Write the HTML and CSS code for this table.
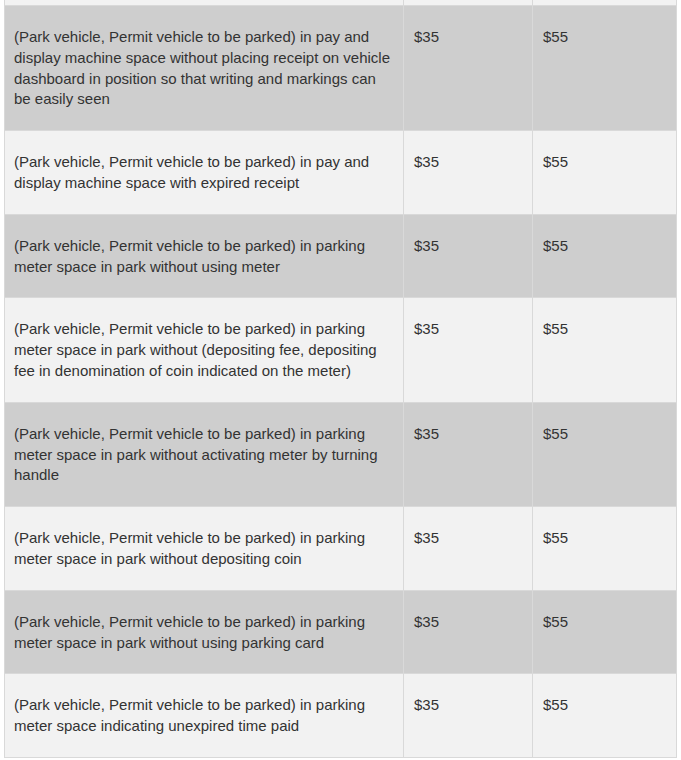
FILE: index.html
```html
<!DOCTYPE html>
<html>
<head>
<meta charset="utf-8">
<link rel="stylesheet" href="styles.css">
</head>
<body>
<div class="wrap">
<table class="fines">
<colgroup><col class="c1"><col class="c2"><col class="c3"></colgroup>
<tbody>
<tr class="prev"><td></td><td></td><td></td></tr>
<tr class="dark"><td>(Park vehicle, Permit vehicle to be parked) in pay and display machine space without placing receipt on vehicle dashboard in position so that writing and markings can be easily seen</td><td>$35</td><td>$55</td></tr>
<tr class="light"><td>(Park vehicle, Permit vehicle to be parked) in pay and display machine space with expired receipt</td><td>$35</td><td>$55</td></tr>
<tr class="dark"><td>(Park vehicle, Permit vehicle to be parked) in parking meter space in park without using meter</td><td>$35</td><td>$55</td></tr>
<tr class="light"><td>(Park vehicle, Permit vehicle to be parked) in parking meter space in park without (depositing fee, depositing fee in denomination of coin indicated on the meter)</td><td>$35</td><td>$55</td></tr>
<tr class="dark"><td>(Park vehicle, Permit vehicle to be parked) in parking meter space in park without activating meter by turning handle</td><td>$35</td><td>$55</td></tr>
<tr class="light"><td>(Park vehicle, Permit vehicle to be parked) in parking meter space in park without depositing coin</td><td>$35</td><td>$55</td></tr>
<tr class="dark"><td>(Park vehicle, Permit vehicle to be parked) in parking meter space in park without using parking card</td><td>$35</td><td>$55</td></tr>
<tr class="light"><td>(Park vehicle, Permit vehicle to be parked) in parking meter space indicating unexpired time paid</td><td>$35</td><td>$55</td></tr>
</tbody>
</table>
</div>
</body>
</html>
```
FILE: styles.css
```css
html, body {
  margin: 0;
  padding: 0;
  background: #ffffff;
}
.wrap {
  padding: 0 5px 0 4px;
}
.fines {
  width: 672px;
  border-collapse: collapse;
  table-layout: fixed;
  font-family: "Liberation Sans", Arial, sans-serif;
  font-size: 15px;
  line-height: 20.8px;
  color: #333333;
}
.c1 { width: 399px; }
.c2 { width: 129px; }
.c3 { width: 144px; }
.fines td {
  border: 1px solid #d9d9d9;
  padding: 21px 10px 20px 10px;
  vertical-align: top;
}
.fines td:first-child {
  padding-left: 9px;
}
.fines tr.prev td {
  height: 5px;
  padding: 0;
  border-top: none;
  background: #f2f2f2;
}
.fines tr.dark td {
  background: #cecece;
}
.fines tr.light td {
  background: #f2f2f2;
}
```
